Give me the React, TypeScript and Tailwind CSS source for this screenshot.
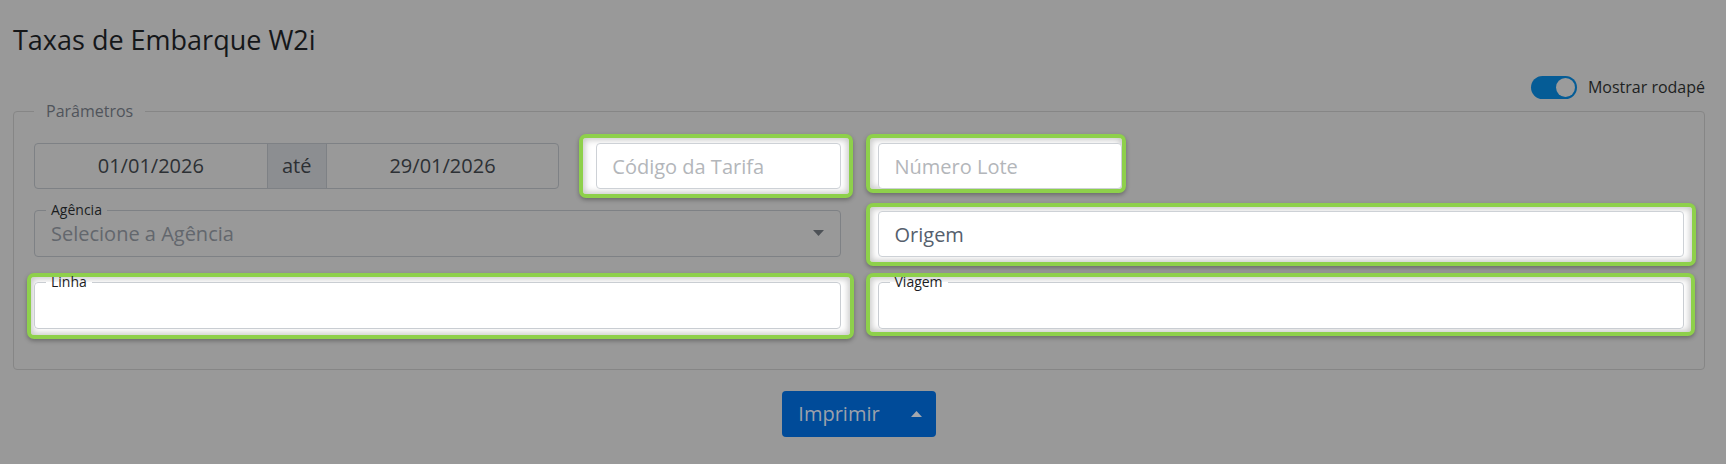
import React from "react";

function Highlight({ pos }: { pos: string }) {
  return (
    <div
      className={`absolute ${pos} rounded-[7px] border-4 border-[#8ed04b] bg-white shadow-[0_2px_4px_rgba(0,0,0,0.3),inset_0_0_6px_2px_rgba(0,0,0,0.22)]`}
    />
  );
}

export default function App() {
  return (
    <div className="min-h-[464px] w-full bg-[#999999] pl-[13px] pr-[21px] font-['Open_Sans',sans-serif]">
      <h1 className="pt-[23px] text-[27px] font-normal leading-[34px] text-[#151719]">
        Taxas de Embarque W2i
      </h1>

      <div className="mt-[18px] flex h-[24px] items-center justify-end gap-[11px]">
        <div className="flex h-[23px] w-[46px] items-center justify-end rounded-full bg-[#055c96] p-[2px]">
          <div className="h-[19px] w-[19px] rounded-full bg-[#9b9b9b]" />
        </div>
        <span className="text-[16px] leading-[24px] text-[#1d1f21]">Mostrar rodapé</span>
      </div>

      <fieldset className="rounded-[4px] border border-[#868686] px-[20px] pb-[40px] pt-[20px]">
        <legend className="px-[12px] text-[16px] leading-[24px] text-[#50545b]">Parâmetros</legend>

        {/* Row 1 */}
        <div className="grid grid-cols-12 items-end gap-x-[37px]">
          <div className="col-span-4 flex h-[46px] rounded-[4px] border border-[#7e8185] text-[20px] text-[#2c3034]">
            <div className="flex flex-1 items-center justify-center">01/01/2026</div>
            <div className="flex w-[60px] items-center justify-center border-x border-[#7e8185] bg-[#8c8e91]">
              até
            </div>
            <div className="flex flex-1 items-center justify-center">29/01/2026</div>
          </div>

          <div className="relative col-span-2 h-[46px]">
            <Highlight pos="left-[-17px] right-[-12px] top-[-9px] bottom-[-9px]" />
            <input
              readOnly
              placeholder="Código da Tarifa"
              className="relative h-full w-full rounded-[4px] border border-[#cdd1d6] bg-white px-[15px] text-[20px] text-[#495057] outline-none placeholder:text-[#b3b6ba]"
            />
          </div>

          <div className="relative col-span-2 h-[46px]">
            <Highlight pos="left-[-12px] right-[-4px] top-[-9px] bottom-[-4px]" />
            <input
              readOnly
              placeholder="Número Lote"
              className="relative h-full w-full rounded-[4px] border border-[#cdd1d6] bg-white px-[16px] text-[20px] text-[#495057] outline-none placeholder:text-[#b3b6ba]"
            />
          </div>
        </div>

        {/* Row 2 */}
        <div className="mt-[12px] grid grid-cols-12 items-end gap-x-[37px]">
          <fieldset className="col-span-6 rounded-[4px] border border-[#7e8185] pl-[11px] pr-[16px]">
            <legend className="px-[5px] text-[14px] leading-[18px] text-[#1b1d1f]">Agência</legend>
            <div className="flex h-[37px] items-start justify-between pl-[5px]">
              <span className="text-[20px] leading-[30px] text-[#63676d]">Selecione a Agência</span>
              <svg width="11" height="6" viewBox="0 0 11 6" className="mt-[11px]">
                <path d="M0 0 L11 0 L5.5 6 Z" fill="#4e5257" />
              </svg>
            </div>
          </fieldset>

          <div className="relative col-span-6 h-[46px]">
            <Highlight pos="left-[-12px] right-[-12px] top-[-8px] bottom-[-9px]" />
            <input
              readOnly
              value="Origem"
              className="relative h-full w-full rounded-[4px] border border-[#cdd1d6] bg-white px-[16px] text-[20px] text-[#56606d] outline-none"
            />
          </div>
        </div>

        {/* Row 3 */}
        <div className="mt-[16px] grid grid-cols-12 items-end gap-x-[37px]">
          <div className="relative col-span-6">
            <Highlight pos="left-[-7px] right-[-13px] top-[0px] bottom-[-10px]" />
            <fieldset className="relative rounded-[4px] border border-[#c9cdd2] bg-white pl-[11px]">
              <legend className="px-[5px] text-[14px] leading-[18px] text-[#1b1d1f]">Linha</legend>
              <div className="h-[37px]" />
            </fieldset>
          </div>

          <div className="relative col-span-6">
            <Highlight pos="left-[-12px] right-[-11px] top-[0px] bottom-[-7px]" />
            <fieldset className="relative rounded-[4px] border border-[#c9cdd2] bg-white pl-[11px]">
              <legend className="px-[5px] text-[14px] leading-[18px] text-[#1b1d1f]">Viagem</legend>
              <div className="h-[37px]" />
            </fieldset>
          </div>
        </div>
      </fieldset>

      <div className="mt-[21px] flex justify-center">
        <button className="flex h-[46px] items-center gap-[31px] rounded-[4px] bg-[#004b99] pl-[16px] pr-[14px] text-[20px] text-[#9ca1ab]">
          <span>Imprimir</span>
          <svg width="11" height="6" viewBox="0 0 11 6">
            <path d="M0 6 L5.5 0 L11 6 Z" fill="#a3a7ae" />
          </svg>
        </button>
      </div>
    </div>
  );
}
